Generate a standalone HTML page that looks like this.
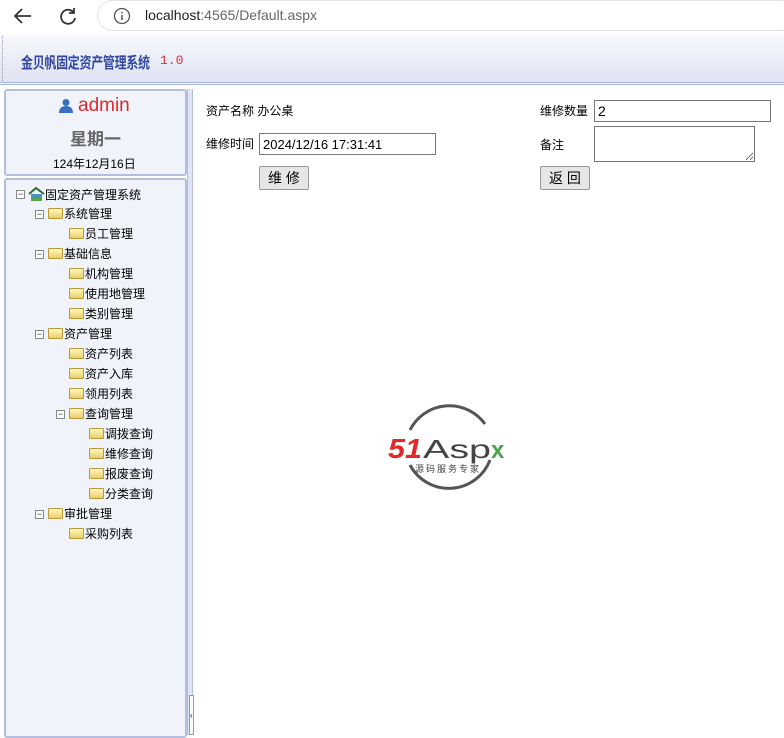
<!DOCTYPE html>
<html><head><meta charset="utf-8"><style>
*{margin:0;padding:0;box-sizing:border-box}
body{width:784px;height:735px;overflow:hidden;background:#fff;font-family:"Liberation Sans","Noto Sans CJK SC",sans-serif;font-size:12px;color:#000;position:relative}
.abs{position:absolute}
.bar{left:0;top:0;width:784px;height:35px;background:#fff}
.url{left:97px;top:0;width:700px;height:31px;border:1px solid #e3e3e3;border-radius:16px;background:#fff}
.hdr{left:0;top:35px;width:784px;height:50px;background:linear-gradient(#f7f8fc,#dfe4f3);border-bottom:3px double #a9b6dc}
.panel{background:#f0f3fa;border:2px solid #b3bfdc;border-radius:3px}
.t{position:absolute;height:16px;line-height:16px;white-space:nowrap;font-size:12px}
.box{position:absolute;width:9px;height:9px;border:1px solid #888;background:#fff;font-size:9px;line-height:6px;text-align:center;color:#333}
.fold{position:absolute;width:15px;height:11px;background:linear-gradient(#fff6c0,#e9cf6a);border:1px solid #b89a3a;border-radius:1px}
input,textarea{font-family:"Liberation Sans",sans-serif}
.btn{position:absolute;height:24px;background:#e6e6e6;border:1px solid #999;border-radius:2px;font-size:14px;text-align:center;line-height:22px}
</style></head><body>
<div class="abs bar"></div>
<div class="abs url"></div>
<svg class="abs" style="left:12px;top:5px" width="22" height="22" viewBox="0 0 22 22"><path d="M19 11H4M10 4l-7 7 7 7" stroke="#333" stroke-width="1.8" fill="none"/></svg>
<svg class="abs" style="left:57px;top:5px" width="22" height="22" viewBox="0 0 22 22"><path d="M17 8a7 7 0 1 0 1 5M17 3v5h-5" stroke="#333" stroke-width="1.8" fill="none"/></svg>
<svg class="abs" style="left:112px;top:6px" width="20" height="20"><circle cx="10" cy="10" r="7.5" stroke="#555" stroke-width="1.3" fill="none"/><path d="M10 9v5M10 6v1.5" stroke="#555" stroke-width="1.5"/></svg>
<div class="abs" style="left:145px;top:7px;font-size:14px;color:#222">localhost<span style="color:#666">:4565/Default.aspx</span></div>
<div class="abs hdr"></div>
<div class="abs" style="left:2px;top:36px;width:1px;height:45px;border-left:1px dotted #99a"></div>
<div class="abs" style="left:21px;top:51px;font-size:12px;font-weight:bold;color:#3347a3;letter-spacing:-0.3px;transform:scaleY(1.3);transform-origin:left top">金贝帆固定资产管理系统</div>
<div class="abs" style="left:160px;top:53px;font-size:13px;color:#e03030;font-family:'Liberation Mono',monospace;z-index:2">1.0</div>

<div class="abs panel" style="left:4px;top:89px;width:183px;height:87px"></div>
<svg class="abs" style="left:58px;top:98px" width="16" height="16"><circle cx="8" cy="4.5" r="3.5" fill="#3a6fc0"/><path d="M1 15c0-5 3-7 7-7s7 2 7 7z" fill="#3a6fc0"/></svg>
<div class="abs" style="left:78px;top:95px;font-size:19px;color:#e0282a">admin</div>
<div class="abs" style="left:70px;top:125px;font-size:17px;font-weight:bold;color:#666">星期一</div>
<div class="abs" style="left:53px;top:155px;font-size:12px">124年12月16日</div>

<div class="abs panel" style="left:4px;top:178px;width:183px;height:560px"></div>
<div class="abs" style="left:187px;top:89px;width:6px;height:646px;background:#dfe5f3;border-left:1px solid #b3bfdc;border-right:1px solid #b3bfdc"></div>
<div class="abs" style="left:189px;top:695px;width:5px;height:40px;border:1px solid #999;background:#fff;font-size:8px;line-height:40px">‹</div>

<div class="box" style="left:16px;top:190px">−</div>
<svg class="abs" style="left:28px;top:186px" width="17" height="16"><path d="M1 8L8 2l8 6" stroke="#2d6a2d" stroke-width="2" fill="none"/><rect x="3" y="8" width="11" height="7" fill="#4a90c0"/><rect x="4" y="12" width="9" height="3" fill="#5aa54a"/></svg>
<div class="t" style="left:45px;top:187px">固定资产管理系统</div>

<div class="box" style="left:35px;top:210px">−</div><div class="fold" style="left:48px;top:208px"></div><div class="t" style="left:64px;top:206px">系统管理</div>
<div class="fold" style="left:69px;top:228px"></div><div class="t" style="left:85px;top:226px">员工管理</div>
<div class="box" style="left:35px;top:250px">−</div><div class="fold" style="left:48px;top:248px"></div><div class="t" style="left:64px;top:246px">基础信息</div>
<div class="fold" style="left:69px;top:268px"></div><div class="t" style="left:85px;top:266px">机构管理</div>
<div class="fold" style="left:69px;top:288px"></div><div class="t" style="left:85px;top:286px">使用地管理</div>
<div class="fold" style="left:69px;top:308px"></div><div class="t" style="left:85px;top:306px">类别管理</div>
<div class="box" style="left:35px;top:330px">−</div><div class="fold" style="left:48px;top:328px"></div><div class="t" style="left:64px;top:326px">资产管理</div>
<div class="fold" style="left:69px;top:348px"></div><div class="t" style="left:85px;top:346px">资产列表</div>
<div class="fold" style="left:69px;top:368px"></div><div class="t" style="left:85px;top:366px">资产入库</div>
<div class="fold" style="left:69px;top:388px"></div><div class="t" style="left:85px;top:386px">领用列表</div>
<div class="box" style="left:56px;top:410px">−</div><div class="fold" style="left:69px;top:408px"></div><div class="t" style="left:85px;top:406px">查询管理</div>
<div class="fold" style="left:89px;top:428px"></div><div class="t" style="left:105px;top:426px">调拨查询</div>
<div class="fold" style="left:89px;top:448px"></div><div class="t" style="left:105px;top:446px">维修查询</div>
<div class="fold" style="left:89px;top:468px"></div><div class="t" style="left:105px;top:466px">报废查询</div>
<div class="fold" style="left:89px;top:488px"></div><div class="t" style="left:105px;top:486px">分类查询</div>
<div class="box" style="left:35px;top:510px">−</div><div class="fold" style="left:48px;top:508px"></div><div class="t" style="left:64px;top:506px">审批管理</div>
<div class="fold" style="left:69px;top:528px"></div><div class="t" style="left:85px;top:526px">采购列表</div>

<div class="t" style="left:206px;top:103px">资产名称 办公桌</div>
<div class="t" style="left:206px;top:136px">维修时间</div>
<input class="abs" style="left:259px;top:133px;width:177px;height:22px;border:1px solid #777;font-size:13px;padding-left:3px" value="2024/12/16 17:31:41">
<div class="btn" style="left:259px;top:166px;width:50px">维 修</div>
<div class="t" style="left:540px;top:103px">维修数量</div>
<input class="abs" style="left:594px;top:100px;width:177px;height:22px;border:1px solid #777;font-size:14px;padding-left:3px" value="2">
<div class="t" style="left:540px;top:137px">备注</div>
<textarea class="abs" style="left:594px;top:126px;width:161px;height:36px;border:1px solid #777;resize:both"></textarea>
<div class="btn" style="left:540px;top:166px;width:50px">返 回</div>

<svg class="abs" style="left:385px;top:400px" width="130" height="95" viewBox="0 0 130 95">
<path d="M25 30A44 44 0 0 1 100 24" stroke="#555" stroke-width="3" fill="none"/>
<path d="M105 60A44 44 0 0 1 25 65" stroke="#555" stroke-width="3" fill="none"/>
<text x="3" y="58" font-family="Liberation Sans" font-size="28" font-weight="bold" font-style="italic" fill="#e02a2a" textLength="34" lengthAdjust="spacingAndGlyphs">51</text>
<text x="38" y="58" font-family="Liberation Sans" font-size="26" fill="#444" textLength="68" lengthAdjust="spacingAndGlyphs">Asp</text>
<text x="106" y="58" font-family="Liberation Sans" font-size="24" font-weight="bold" fill="#4aa34a">x</text>
<text x="30" y="72" font-family="Noto Sans CJK SC" font-size="9" fill="#444" textLength="64" lengthAdjust="spacing">源码服务专家</text>
</svg>
</body></html>
